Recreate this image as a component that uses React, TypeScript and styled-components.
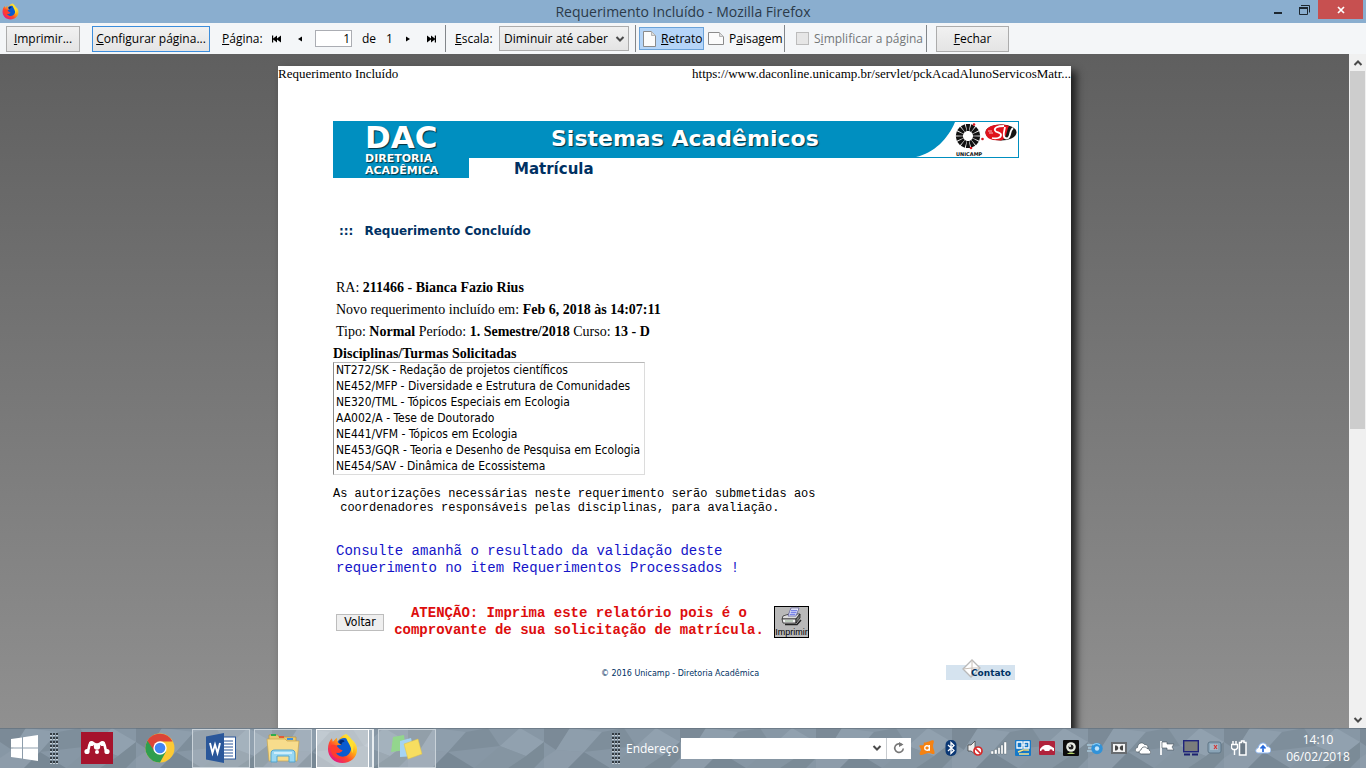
import React from 'react';
import styled, { createGlobalStyle, css } from 'styled-components';

const UI = '"Open Sans", "Noto Sans", sans-serif';
const SERIF = '"Liberation Serif", serif';
const MONO = '"Liberation Mono", monospace';
const VERDANA = '"DejaVu Sans", sans-serif';
const TAHOMA = '"DejaVu Sans Condensed", "DejaVu Sans", sans-serif';
const TEAL = '#008fc0';
const NAVY = '#003163';

const GlobalStyle = createGlobalStyle`
  * { box-sizing: border-box; }
  body { margin: 0; font-family: ${UI}; font-size: 12px; color: #000; overflow: hidden; }
  button, input, select { font: inherit; color: inherit; margin: 0; }
  svg { display: block; flex: none; }
`;

const Window = styled.div`
  display: flex;
  flex-direction: column;
  height: 100vh;
`;

/* ---------- title bar ---------- */

const TitleBar = styled.header`
  display: grid;
  grid-template-columns: 1fr auto 1fr;
  height: 23px;
  background: #8aaecf;
`;
const TitleIcon = styled.div`
  padding: 3px 2px;
`;
const Title = styled.h1`
  margin: 0;
  font-size: 14px;
  font-weight: 400;
  line-height: 23px;
  color: #2b3a49;
`;
const Controls = styled.div`
  display: flex;
  justify-content: flex-end;
  padding-right: 3px;
`;
const ControlButton = styled.button<{ $close?: boolean }>`
  display: flex;
  align-items: center;
  justify-content: center;
  width: ${p => (p.$close ? 45 : 27)}px;
  height: 19px;
  padding: 0;
  border: 0;
  background: ${p => (p.$close ? '#c75050' : 'transparent')};
`;

/* ---------- print toolbar ---------- */

const Toolbar = styled.div`
  display: flex;
  align-items: center;
  height: 31px;
  padding-left: 6px;
  background: #f4f6f8;
  white-space: nowrap;
`;
const ToolButton = styled.button<{ $w: number; $focus?: boolean }>`
  width: ${p => p.$w}px;
  height: 26px;
  padding: 0;
  border: 1px solid ${p => (p.$focus ? '#3c8ddb' : '#acacac')};
  background: linear-gradient(#f1f1f1, #e4e4e4);
`;
const Group = styled.div<{ $start?: number; $w?: number }>`
  display: flex;
  align-items: center;
  padding-left: ${p => p.$start ?? 12}px;
  width: ${p => (p.$w ? p.$w + 'px' : 'auto')};
`;
const FieldLabel = styled.label<{ $w: number }>`
  width: ${p => p.$w}px;
`;
const Nav = styled.button<{ $w: number }>`
  display: flex;
  align-items: center;
  justify-content: center;
  width: ${p => p.$w}px;
  height: 20px;
  padding: 0;
  border: 0;
  background: none;
`;
const PageInput = styled.input`
  width: 37px;
  height: 17px;
  margin-left: 5px;
  padding: 0 1px;
  border: 1px solid #abadb3;
  background: #fff;
  text-align: right;
`;
const Of = styled.span`
  width: 24px;
`;
const Total = styled.span`
  width: 10px;
`;
const Divider = styled.div`
  width: 1px;
  height: 27px;
  background: #82868a;
`;
const SelectWrap = styled.div`
  display: grid;
  align-items: center;
  width: 130px;
  & > * { grid-area: 1 / 1; }
  & > svg { justify-self: end; margin-right: 4px; pointer-events: none; }
`;
const Scale = styled.select`
  appearance: none;
  width: 100%;
  height: 25px;
  padding: 0 18px 0 4px;
  border: 1px solid #acacac;
  border-radius: 0;
  background: linear-gradient(#f1f1f1, #e4e4e4);
`;
const Orientation = styled.button<{ $w: number }>`
  display: flex;
  align-items: center;
  gap: 5px;
  width: ${p => p.$w}px;
  height: 23px;
  padding: 0 3px;
  border: 1px solid transparent;
  background: none;
  &[aria-pressed='true'] {
    border-color: #6ba3d9;
    background: #b5d5f8;
  }
`;
const Simplify = styled.label`
  display: flex;
  align-items: center;
  gap: 5px;
  width: 130px;
  color: #737679;
`;
const Tick = styled.input`
  appearance: none;
  width: 13px;
  height: 13px;
  border: 1px solid #bcbcbc;
  background: #e6e6e6;
`;

/* ---------- preview area ---------- */

const Preview = styled.div`
  display: flex;
  flex: 1;
  min-height: 0;
`;
const Canvas = styled.main`
  flex: 1;
  overflow: hidden;
  padding-top: 12px;
  background: linear-gradient(#5f5f5f, #909090);
`;
const Sheet = styled.article`
  max-width: 793px;
  min-height: 1000px;
  margin: 0 auto;
  background: #fff;
  box-shadow: 5px 5px 8px #1c1c1c;
`;
const RunningHead = styled.div`
  display: flex;
  justify-content: space-between;
  font: 13px/16px ${SERIF};
`;
const SheetBody = styled.div`
  padding: 39px 52px 0 55px;
`;

const Banner = styled.div`
  display: flex;
`;
const Dac = styled.div`
  width: 136px;
  height: 57px;
  padding-left: 32px;
  background: ${TEAL};
  color: #fff;
  font-family: ${VERDANA};
  font-weight: 700;
  text-shadow: 1px 1px 1px #04303f;
`;
const DacName = styled.div`
  font-size: 31px;
  line-height: 32px;
`;
const DacSub = styled.div`
  font-size: 11px;
  line-height: 12px;
`;
const BannerRight = styled.div`
  flex: 1;
`;
const BannerBar = styled.div`
  display: flex;
  justify-content: space-between;
  height: 37px;
  padding-left: 82px;
  border: 1px solid ${TEAL};
  border-left: 0;
  background: ${TEAL};
`;
const SystemName = styled.div`
  color: #fff;
  font: 700 22px/34px ${VERDANA};
  text-shadow: 1px 1px 1px #04303f;
  white-space: nowrap;
`;
const Section = styled.h2`
  margin: 0;
  padding-left: 45px;
  color: ${NAVY};
  font: 700 15px/22px ${VERDANA};
`;
const Heading = styled.h3`
  display: flex;
  gap: 11px;
  margin: 43px 0 38px;
  padding-left: 6px;
  color: ${NAVY};
  font: 700 12px/16px ${VERDANA};
`;
const Fact = styled.p`
  margin: 0;
  padding-left: 3px;
  font: 14px/22px ${SERIF};
`;
const ListLabel = styled.label`
  display: block;
  padding-top: 3px;
  font: 700 14px/16px ${SERIF};
`;
const Courses = styled.select`
  appearance: none;
  display: block;
  width: 312px;
  height: 113px;
  padding: 0;
  overflow: hidden;
  border: 1px solid #dcdcdc;
  border-left-color: #8a8a8a;
  border-top-color: #b8b8b8;
  border-radius: 0;
  background: #fff;
  font: 12px ${TAHOMA};
`;
const Course = styled.option`
  min-height: 0;
  height: 16px;
  padding: 0 2px;
  line-height: 16px;
`;
const Notice = styled.p`
  margin: 12px 0 0;
  font: 12px/14px ${MONO};
  white-space: pre;
`;
const Hint = styled.p`
  margin: 28px 0 0;
  padding-left: 3px;
  color: #1414c8;
  font: 14px/17px ${MONO};
`;
const Actions = styled.div`
  display: flex;
  align-items: center;
  margin: 28px 0 0 3px;
  width: 473px;
`;
const Back = styled.button`
  width: 48px;
  height: 17px;
  padding: 0;
  border: 1px solid #bdbdbd;
  background: #efefef;
  font: 12px/15px ${TAHOMA};
`;
const Warning = styled.p`
  flex: 1;
  margin: 0;
  color: #dd0d0d;
  font: 700 14px/17px ${MONO};
  text-align: center;
`;
const PrintButton = styled.button`
  width: 35px;
  height: 32px;
  padding: 0;
  border: 1px solid #000;
  background: #b9b9b9;
  font: 9px/10px "Liberation Sans", sans-serif;
  display: flex;
  flex-direction: column;
  align-items: center;
`;
const Footer = styled.footer`
  display: grid;
  grid-template-columns: 1fr auto 1fr;
  align-items: end;
  margin-top: 20px;
  padding: 0 4px 0 12px;
  color: ${NAVY};
  font: 8px/12px ${VERDANA};
`;
const Contact = styled.a`
  justify-self: end;
  display: grid;
  width: 69px;
  height: 21px;
  color: ${NAVY};
  font: 700 9px/13px ${VERDANA};
  text-decoration: none;
  background: linear-gradient(transparent 6px, #d5e3ef 6px);
  & > * { grid-area: 1 / 1; }
  & > svg { margin-left: 16px; }
  & > span { justify-self: end; align-self: end; padding-right: 4px; }
`;

const ScrollBar = styled.div`
  display: flex;
  flex-direction: column;
  width: 17px;
  background: #f0f0f0;
`;
const ScrollArrow = styled.button`
  display: grid;
  place-items: center;
  height: 17px;
  padding: 0;
  border: 0;
  background: none;
`;
const ScrollTrack = styled.div`
  flex: 1;
  padding: 0 1px;
`;
const Thumb = styled.div`
  height: 56%;
  background: #cdcdcd;
`;

/* ---------- taskbar ---------- */

const TaskBar = styled.nav`
  display: grid;
  height: 40px;
  overflow: hidden;
  & > * { grid-area: 1 / 1; min-width: 0; }
`;
const TaskRow = styled.div`
  display: flex;
  align-items: center;
  z-index: 1;
  padding-right: 14px;
`;
const TaskButton = styled.button<{ $w: number; $open?: boolean; $active?: boolean }>`
  display: grid;
  place-items: center;
  width: ${p => p.$w}px;
  height: 39px;
  padding: 0;
  border: 1px solid transparent;
  background: none;
  ${p => p.$open && css`
    margin-right: 4px;
    border-color: #c9d2d9;
    background: rgba(255, 255, 255, 0.18);
  `}
  ${p => p.$active && css`
    margin-right: 9px;
    border-color: #fff;
    background: rgba(255, 255, 255, 0.45);
    box-shadow: 4px 0 0 -1px #a3b1bd, 5px 0 0 0 #e8edf0;
  `}
`;
const Spacer = styled.div`
  flex: 1;
`;
const AddressLabel = styled.label`
  width: 61px;
  padding-left: 6px;
  color: #fff;
`;
const AddressBox = styled.div`
  display: flex;
  align-items: center;
  width: 230px;
  height: 21px;
  background: #fff;
`;
const AddressInput = styled.input`
  flex: 1;
  min-width: 0;
  height: 21px;
  border: 0;
  background: transparent;
`;
const AddressButton = styled.button<{ $line?: boolean }>`
  display: grid;
  place-items: center;
  width: ${p => (p.$line ? 25 : 18)}px;
  height: 21px;
  padding: 0;
  border: 0;
  border-left: ${p => (p.$line ? '1px solid #c8ccd0' : '0')};
  background: none;
`;
const Tray = styled.div`
  display: flex;
  margin-left: 4px;
`;
const TrayButton = styled.button`
  display: grid;
  place-items: center;
  width: 24px;
  height: 24px;
  padding: 0;
  border: 0;
  background: none;
`;
const Clock = styled.div`
  width: 77px;
  padding-left: 9px;
  color: #fff;
  line-height: 17px;
  text-align: center;
  white-space: nowrap;
`;

/* ---------- drawings ---------- */

const Firefox = ({ size }: { size: number }) => (
  <svg width={size} height={size} viewBox="0 0 32 32">
    <defs>
      <linearGradient id="fxa" x1="0.85" y1="0.1" x2="0.15" y2="0.9">
        <stop offset="0" stopColor="#fff44f" />
        <stop offset="0.35" stopColor="#ffb014" />
        <stop offset="0.65" stopColor="#ff4a2c" />
        <stop offset="1" stopColor="#e31587" />
      </linearGradient>
    </defs>
    <path d="M16 31C7.500 31 1 24.500 1 16.500C1 12 2.500 8 5 5.500L6 9L10 5L11 9C13 5 16 2 20 1C19.500 3 21 4 23 5.500C28 8 31 12 31 17C31 25 24.500 31 16 31Z" fill="url(#fxa)" />
    <path d="M11 9C14 4 21 4 23 8C26 12 26 20 21 23C17 26 11 24 9 20C12 21 14 20 16 18C13 18 10 16 10 13C11 12 13 12.500 15 12C13 11 11.500 10.500 11 9Z" fill="#0a5bd0" />
    <path d="M13 8C15 6 18 7 18 9C16 9 15 10 15 12C13 11.500 12 10 13 8Z" fill="#002a7a" />
    <path d="M4 13C5 12 7 12 10 13C11 15 13 17 16 18C14 20 12 21 9 20C10 24 15 26 20 24C16 28 9 27 6 23C4 20 3 16 4 13Z" fill="#ff3d2e" />
    <path d="M20 1C27 6 29 13 26 21C25 14 22 10 20.500 7C19.500 5 19.500 3 20 1Z" fill="#ffe02e" />
  </svg>
);

const Sheetlet = ({ wide }: { wide?: boolean }) => (
  <svg width={wide ? 16 : 13} height={wide ? 13 : 16} viewBox={wide ? '0 0 16 13' : '0 0 13 16'}>
    <path d={wide ? 'M.5 .5H11.500L15.500 4.500V12.500H.5Z' : 'M.5 .5H8.500L12.500 4.500V15.500H.5Z'} fill="#fbfbfb" stroke="#8b8b8b" />
    <path d={wide ? 'M11.500 .5V4.500H15.500' : 'M8.500 .5V4.500H12.500'} fill="#ddd" stroke="#b5b5b5" />
  </svg>
);

const Chevron = ({ up, size = 10 }: { up?: boolean; size?: number }) => (
  <svg width={size} height={size} viewBox="0 0 10 10">
    <path d={up ? 'M1.500 7L5 3.500L8.500 7' : 'M1.500 3L5 6.500L8.500 3'} fill="none" stroke="#4a4a4a" strokeWidth="2" />
  </svg>
);

const NavGlyph = ({ kind }: { kind: 'first' | 'prev' | 'next' | 'last' }) => {
  const flip = kind === 'next' || kind === 'last';
  const end = kind === 'first' || kind === 'last';
  return (
    <svg width="12" height="8" viewBox="0 0 12 8">
      <g transform={flip ? 'translate(12 0) scale(-1 1)' : undefined}>
        {end ? <path d="M1 0.500H2.200V3.500L6 0.500V3.500L10 0.500V7.500L6 4.500V7.500L2.200 4.500V7.500H1Z" /> : <path d="M8 1.500V6.500L4 4Z" />}
      </g>
    </svg>
  );
};

const spokes = Array.from({ length: 14 }, (_, i) => (i * 360) / 14);
const Logos = () => (
  <svg width="102" height="35" viewBox="0 0 102 35">
    <path d="M0 35C18 31 32 17 39 0H102V35Z" fill="#fff" />
    {spokes.map(a => (
      <path key={a} d="M-1 -5L-2.200 -12H2.200L1 -5Z" transform={`translate(52 14) rotate(${a})`} fill="#111" />
    ))}
    <circle cx="58" cy="2.500" r="1.300" fill="#d8141c" />
    <circle cx="66.500" cy="17" r="1.300" fill="#d8141c" />
    <circle cx="55" cy="26" r="1.300" fill="#d8141c" />
    <text x="40" y="34" fontFamily="DejaVu Sans" fontWeight="700" fontSize="5" fill="#111">UNICAMP</text>
    <ellipse cx="85" cy="10.500" rx="15.500" ry="8" fill="#151515" />
    <path d="M85 2.500C74 2.500 69 6.500 69.500 11.500C70 15 73 17 77 18L85 18.500C91 17 90 9 93 4C90 3 88 2.500 85 2.500Z" fill="#e0121c" />
    <path d="M88 4C81 4 78 6 79 8.500C80 11 85 10 85 13C85 16 80 17 76 16" fill="none" stroke="#fff" strokeWidth="1.800" />
    <path d="M89 5C88 10 86 16.500 91 16.500C95 16.500 93 9 97 6" fill="none" stroke="#fff" strokeWidth="1.800" />
    <path d="M72 9H76M73 11H77" stroke="#fff" strokeWidth="0.700" />
  </svg>
);

const Printer = () => (
  <svg width="24" height="20" viewBox="0 0 24 20">
    <path d="M3 9L9 7H20L16 12H2Z" fill="#ddd" stroke="#333" strokeWidth="0.800" />
    <path d="M8 9L11 1H19L16 9Z" fill="#fff" stroke="#5a5a9a" strokeWidth="0.800" />
    <path d="M11 3.500H17M10.500 5.500H16.500M9.500 7.500H15.500" stroke="#7a84e8" strokeWidth="1.400" />
    <path d="M2 12H16V16H3Z" fill="#f4f4f4" stroke="#222" strokeWidth="0.800" />
    <path d="M16 12L20 7V11L16 16Z" fill="#777" stroke="#222" strokeWidth="0.800" />
    <path d="M5 17.500H17L21 13" stroke="#222" strokeWidth="1.500" fill="none" />
    <path d="M5 14H13" stroke="#8aa88a" />
  </svg>
);

const Envelope = () => (
  <svg width="20" height="19" viewBox="0 0 20 19">
    <path d="M1 10L10 1L18 9L9 18Z" fill="#fff" stroke="#b9b9b9" strokeWidth="1.300" />
    <path d="M10 1V9L18 9M10 9L1 10M10 9L9 18" stroke="#c9c0b8" fill="none" />
  </svg>
);

const Grip = () => (
  <svg width="8" height="32" viewBox="0 0 8 32">
    {Array.from({ length: 8 }, (_, r) =>
      [0, 3, 6].map(x => (
        <g key={`${r}-${x}`}>
          <rect x={x} y={r * 4 + 1} width="2" height="2" fill="#343c43" />
          <rect x={x} y={r * 4 + 3} width="2" height="1" fill="#c6d0d8" />
        </g>
      ))
    )}
  </svg>
);

const Wallpaper = () => (
  <svg width="100%" height="40">
    <defs>
      <pattern id="facets" width="136" height="40" patternUnits="userSpaceOnUse">
        <rect width="136" height="40" fill="#8797a5" />
        <path d="M0 0L26 0L12 22L0 14Z" fill="#7b8a97" />
        <path d="M26 0L58 4L40 24L12 22Z" fill="#8e9eac" />
        <path d="M58 4L80 0L92 18L40 24Z" fill="#7e8e9b" />
        <path d="M12 22L40 24L24 40H0V30Z" fill="#8d9caa" />
        <path d="M40 24L66 40H24Z" fill="#788895" />
        <path d="M92 18L112 0L136 14L118 28Z" fill="#91a1af" />
        <path d="M92 18L118 28L100 40H66Z" fill="#8595a2" />
        <path d="M118 28L136 14V30L126 40H100Z" fill="#7b8b97" />
      </pattern>
    </defs>
    <rect width="100%" height="40" fill="url(#facets)" />
    <rect width="100%" height="1" fill="#5f6d78" opacity="0.600" />
  </svg>
);

const WindowsLogo = () => (
  <svg width="28" height="26" viewBox="0 0 28 26">
    <path d="M0 4L11 2.500V12.500H0ZM12 2.300L27 0V12.500H12ZM0 13.500H11V23.500L0 22ZM12 13.500H27V26L12 23.700Z" fill="#fff" />
  </svg>
);
const Mendeley = () => (
  <svg width="32" height="32" viewBox="0 0 32 32">
    <rect width="32" height="32" fill="#a6132c" />
    <path d="M6 19C9 18 7 12 10 11C12 10 14 13 16 13C18 13 20 10 22 11C25 12 23 18 26 19" fill="none" stroke="#fff" strokeWidth="2.600" />
    <circle cx="10.500" cy="11.500" r="2.600" fill="#fff" /><circle cx="21.500" cy="11.500" r="2.600" fill="#fff" />
    <circle cx="6" cy="19.500" r="2.600" fill="#fff" /><circle cx="26" cy="19.500" r="2.600" fill="#fff" />
    <circle cx="16" cy="14.500" r="3.200" fill="#fff" />
    <circle cx="16" cy="20" r="2" fill="#fff" />
  </svg>
);
const Chrome = () => (
  <svg width="30" height="30" viewBox="0 0 30 30">
    <circle cx="15" cy="15" r="14.500" fill="#fcc934" />
    <path d="M15 15L2.440 7.750A14.500 14.500 0 0 0 15 29.500L21 18.500Z" fill="#2f9e4f" />
    <path d="M15 8.500H27.560A14.500 14.500 0 0 0 2.440 7.750L9.400 18.200Z" fill="#dc4437" />
    <circle cx="15" cy="15" r="6.700" fill="#fff" />
    <circle cx="15" cy="15" r="5.300" fill="#4285f4" />
  </svg>
);
const Word = () => (
  <svg width="30" height="30" viewBox="0 0 30 30">
    <rect x="15" y="4" width="14.500" height="22" fill="#fff" stroke="#2a579a" />
    <path d="M18 8H27M18 11H27M18 14H27M18 17H27M18 20H27M18 23H27" stroke="#2a579a" strokeWidth="1.200" />
    <path d="M0 3.500L18 0V30L0 26.500Z" fill="#2a579a" />
    <path d="M4 10L6.500 20L9 11.500L11.500 20L14 10" fill="none" stroke="#fff" strokeWidth="1.900" />
  </svg>
);
const Explorer = () => (
  <svg width="34" height="30" viewBox="0 0 34 30">
    <path d="M3 2H12L13 4H30V12H3Z" fill="#e9c870" stroke="#bb9740" strokeWidth="0.700" />
    <path d="M5 1H10V3H5Z" fill="#2fae4b" /><path d="M13 3H18V5H13Z" fill="#e25b38" /><path d="M21 5H27V7H21Z" fill="#3d8fdc" />
    <path d="M1 6H19L21 8H33L31 28H3Z" fill="#f7dc8c" stroke="#c9a54e" strokeWidth="0.700" />
    <path d="M5 29V21C5 18 6 17 9 17H25C28 17 29 18 29 21V29H23V23H11V29Z" fill="#98d7f3" stroke="#55a5cd" />
    <path d="M8 20H26" stroke="#e2f6fe" strokeWidth="1.500" />
  </svg>
);
const Sticky = () => (
  <svg width="32" height="26" viewBox="0 0 32 26">
    <path d="M2 2L13 0L15 15L0 17Z" fill="#93d68d" />
    <path d="M9 6L20 3L24 21L9 22Z" fill="#a5d3f3" />
    <path d="M13 9L27 4L31 19L17 24Z" fill="#f7de60" stroke="#e0c246" strokeWidth="0.500" />
  </svg>
);

const trayIcons: [string, React.ReactNode][] = [
  ['Avast', <>
    <path d="M5 2.500C7 3 8 1.500 10 1.500C12 1 13 0 14.500 0.500C15.500 1.500 14 4 14 6C14 9 16 11 15.500 13.500C14 15 12 13 10 13C7 13 4 15.500 1.500 15C-0.500 14 1.500 11.500 2 10C2 8 0 7 0.500 5.500C1.500 4.500 3.500 6 4.500 5Z" fill="#f58212" />
    <path d="M10.300 5V10.800M10.300 7C9 4.800 5.700 5.600 5.700 8S9 11 10.300 9" fill="none" stroke="#fff" strokeWidth="1.400" /></>],
  ['Bluetooth', <>
    <rect x="2.500" width="11" height="16" rx="5" fill="#0b3875" />
    <path d="M5 5L11 10.500L8 13.500V2.500L11 5.500L5 11" fill="none" stroke="#fff" strokeWidth="1.300" /></>],
  ['Volume', <>
    <path d="M1 5H4L8 1V14L4 11H1Z" fill="#eee" stroke="#333" strokeWidth="0.700" />
    <circle cx="11" cy="11" r="4" fill="#fff" stroke="#d62828" strokeWidth="1.700" /><path d="M8.500 8.500L13.500 13.500" stroke="#d62828" strokeWidth="1.700" /></>],
  ['Rede', <path d="M0 11H2.500V14H0ZM3.500 9.500H6V14H3.500ZM7 7.500H9V14H7ZM10 5H12V14H10ZM13 2H15.500V14H13Z" fill="#fff" stroke="#44505a" strokeWidth="0.300" />],
  ['Monitor', <>
    <rect width="16" height="16" rx="1" fill="#1679c8" />
    <path d="M2 2H7V8H2ZM9 2H14V8H9Z" fill="none" stroke="#fff" strokeWidth="1.300" /><path d="M3 12L8 10L14 10M4 14H14" stroke="#f2e28e" strokeWidth="1.500" /><path d="M7 5H12" stroke="#fff" /></>],
  ['Veículo', <>
    <rect y="1" width="16" height="14" rx="1" fill="#b0233b" />
    <path d="M1 9C3 7 4 5 8 5S12 7 15 8V11H1Z" fill="#fff" /><circle cx="4" cy="11" r="1.700" fill="#b0233b" /><circle cx="12" cy="11" r="1.700" fill="#b0233b" /></>],
  ['Câmera', <>
    <rect width="16" height="16" rx="1" fill="#0c0c0c" />
    <circle cx="8" cy="7" r="4.800" fill="#e8ece4" /><circle cx="8" cy="7" r="2.500" fill="#222" /><circle cx="7" cy="6" r="1" fill="#fff" /><path d="M4 14C6 12 10 12 12 14Z" fill="#b6d56a" /></>],
  ['Sincronização', <>
    <path d="M0 5H7M1 8H6M0 11H7" stroke="#a9c9da" strokeWidth="1.500" />
    <circle cx="10" cy="8.500" r="5.700" fill="#3192d8" /><circle cx="10" cy="8.500" r="2.200" fill="#bfe3fa" /><path d="M6 5C8 3 11 3 13 5" fill="none" stroke="#8fcdf2" strokeWidth="1.200" /></>],
  ['Dolby', <>
    <rect y="2" width="16" height="12" fill="#686c70" /><rect x="2" y="4" width="12" height="8" fill="#f4f4f4" />
    <path d="M4 5.500H5C8 6 8 10 5 10.500H4ZM12 5.500H11C8 6 8 10 11 10.500H12Z" fill="#444" /></>],
  ['OneDrive', <>
    <path d="M2.500 12C-0.500 12 -0.500 8 2.500 7.500C2.500 3 7.500 1.500 9.500 4.500C12 4 13 6 13 8L7 12Z" fill="#fff" stroke="#4c5962" strokeWidth="0.700" />
    <path d="M6.500 14C3.500 14 3.500 10.500 6 10C6.500 6.500 11 6 12 8.500C14 8.500 14.500 9.500 14.500 10.500C16.500 11 16 14 14 14Z" fill="#fff" stroke="#4c5962" strokeWidth="0.800" /></>],
  ['Central de Ações', <>
    <path d="M2 1V15" stroke="#fff" strokeWidth="1.700" /><path d="M3 2H8V4H15L13 7L15 10H8V8H3Z" fill="#fff" stroke="#46525c" strokeWidth="0.600" /></>],
  ['Vídeo', <>
    <rect x="0.700" y="0.700" width="14.600" height="11" fill="#7b7d7b" stroke="#20247c" strokeWidth="1.400" /><path d="M1 14.500H7M9 14.500H15" stroke="#1b206e" strokeWidth="2" /></>],
  ['Memória', <>
    <rect x="1" y="2" width="13" height="11" rx="2" fill="#8aa4b7" stroke="#5e7585" /><rect x="3" y="4" width="8" height="6" fill="#a5b8c6" /><path d="M7 5L10 9M10 5L7 9" stroke="#d43434" strokeWidth="1.200" /></>],
  ['Bateria', <>
    <path d="M0.500 4.500H6.500V8L5 9.500H2L0.500 8ZM2 1V4M5 1V4M3.500 9V15" fill="none" stroke="#fff" strokeWidth="1.400" />
    <path d="M8.500 2.500H10.500V1H13V2.500H15V15H8.500Z" fill="#6c7a86" stroke="#fff" strokeWidth="1.500" /></>],
  ['Nuvem', <>
    <path d="M3 13C0 13 0 8.500 3 8C4 2 11 1 12 6.500C17 6.500 17 13 13 13Z" fill="#fff" stroke="#8bb4ee" />
    <path d="M8 12V6.500M5.500 8.500L8 6L10.500 8.500" fill="none" stroke="#2468dc" strokeWidth="1.700" /></>],
];

const courses = [
  'NT272/SK - Redação de projetos científicos',
  'NE452/MFP - Diversidade e Estrutura de Comunidades',
  'NE320/TML - Tópicos Especiais em Ecologia',
  'AA002/A - Tese de Doutorado',
  'NE441/VFM - Tópicos em Ecologia',
  'NE453/GQR - Teoria e Desenho de Pesquisa em Ecologia',
  'NE454/SAV - Dinâmica de Ecossistema',
];

export default function App() {
  return (
    <Window>
      <GlobalStyle />
      <TitleBar>
        <TitleIcon><Firefox size={17} /></TitleIcon>
        <Title>Requerimento Incluído - Mozilla Firefox</Title>
        <Controls>
          <ControlButton aria-label="Minimizar">
            <svg width="8" height="10"><rect y="7" width="8" height="2" fill="#1d2730" /></svg>
          </ControlButton>
          <ControlButton aria-label="Restaurar">
            <svg width="11" height="10" viewBox="0 0 11 10">
              <path d="M2 .5H10.500V7.500" fill="none" stroke="#1d2730" />
              <path d="M.5 2.500H8.500V9.500H.5Z" fill="none" stroke="#1d2730" /><path d="M0 3H9" stroke="#1d2730" strokeWidth="2" />
            </svg>
          </ControlButton>
          <ControlButton $close aria-label="Fechar janela">
            <svg width="8" height="8"><path d="M1 1L7 7M7 1L1 7" stroke="#fff" strokeWidth="1.700" /></svg>
          </ControlButton>
        </Controls>
      </TitleBar>

      <Toolbar>
        <ToolButton $w={74}><u>I</u>mprimir...</ToolButton>
        <Group><ToolButton $w={118} $focus><u>C</u>onfigurar página...</ToolButton></Group>
        <Group $w={235}>
          <FieldLabel htmlFor="page" $w={43}><u>P</u>ágina:</FieldLabel>
          <Nav $w={24} aria-label="Primeira página"><NavGlyph kind="first" /></Nav>
          <Nav $w={21} aria-label="Página anterior"><NavGlyph kind="prev" /></Nav>
          <PageInput id="page" defaultValue="1" />
          <Group $start={10}><Of>de</Of><Total>1</Total></Group>
          <Nav $w={24} aria-label="Próxima página"><NavGlyph kind="next" /></Nav>
          <Nav $w={22} aria-label="Última página"><NavGlyph kind="last" /></Nav>
        </Group>
        <Divider />
        <Group $start={9} $w={189}>
          <FieldLabel htmlFor="scale" $w={44}><u>E</u>scala:</FieldLabel>
          <SelectWrap>
            <Scale id="scale"><option>Diminuir até caber</option></Scale>
            <Chevron />
          </SelectWrap>
        </Group>
        <Divider />
        <Group $start={3} $w={148}>
          <Orientation $w={65} aria-pressed="true"><Sheetlet /><span><u>R</u>etrato</span></Orientation>
          <Orientation $w={80} aria-pressed="false"><Sheetlet wide /><span>P<u>a</u>isagem</span></Orientation>
        </Group>
        <Divider />
        <Group $start={11}>
          <Simplify><Tick type="checkbox" disabled /><span>S<u>i</u>mplificar a página</span></Simplify>
        </Group>
        <Divider />
        <Group $start={9}><ToolButton $w={73}><u>F</u>echar</ToolButton></Group>
      </Toolbar>

      <Preview>
        <Canvas>
          <Sheet>
            <RunningHead>
              <span>Requerimento Incluído</span>
              <span>https://www.daconline.unicamp.br/servlet/pckAcadAlunoServicosMatr...</span>
            </RunningHead>
            <SheetBody>
              <Banner>
                <Dac>
                  <DacName>DAC</DacName>
                  <DacSub>DIRETORIA</DacSub>
                  <DacSub>ACADÊMICA</DacSub>
                </Dac>
                <BannerRight>
                  <BannerBar>
                    <SystemName>Sistemas Acadêmicos</SystemName>
                    <Logos />
                  </BannerBar>
                  <Section>Matrícula</Section>
                </BannerRight>
              </Banner>

              <Heading><span>:::</span><span>Requerimento Concluído</span></Heading>

              <Fact>RA: <b>211466 - Bianca Fazio Rius</b></Fact>
              <Fact>Novo requerimento incluído em: <b>Feb 6, 2018 às 14:07:11</b></Fact>
              <Fact>Tipo: <b>Normal</b> Período: <b>1. Semestre/2018</b> Curso: <b>13 - D</b></Fact>
              <ListLabel htmlFor="courses">Disciplinas/Turmas Solicitadas</ListLabel>
              <Courses id="courses" multiple size={7}>
                {courses.map(c => <Course key={c}>{c}</Course>)}
              </Courses>

              <Notice>{'As autorizações necessárias neste requerimento serão submetidas aos\n coordenadores responsáveis pelas disciplinas, para avaliação.'}</Notice>
              <Hint>Consulte amanhã o resultado da validação deste<br />requerimento no item Requerimentos Processados !</Hint>

              <Actions>
                <Back>Voltar</Back>
                <Warning>ATENÇÃO: Imprima este relatório pois é o<br />comprovante de sua solicitação de matrícula.</Warning>
                <PrintButton><Printer />Imprimir</PrintButton>
              </Actions>

              <Footer>
                <span />
                <span>© 2016 Unicamp - Diretoria Acadêmica</span>
                <Contact href="#contato"><Envelope /><span>Contato</span></Contact>
              </Footer>
            </SheetBody>
          </Sheet>
        </Canvas>
        <ScrollBar>
          <ScrollArrow aria-label="Rolar para cima"><Chevron up /></ScrollArrow>
          <ScrollTrack><Thumb /></ScrollTrack>
          <ScrollArrow aria-label="Rolar para baixo"><Chevron /></ScrollArrow>
        </ScrollBar>
      </Preview>

      <TaskBar>
        <Wallpaper />
        <TaskRow>
          <TaskButton $w={50} aria-label="Iniciar"><WindowsLogo /></TaskButton>
          <Grip />
          <Group $start={8}>
            <TaskButton $w={62} aria-label="Mendeley"><Mendeley /></TaskButton>
            <TaskButton $w={64} aria-label="Chrome"><Chrome /></TaskButton>
            <TaskButton $w={58} $open aria-label="Word"><Word /></TaskButton>
            <TaskButton $w={58} $open aria-label="Explorador de Arquivos"><Explorer /></TaskButton>
            <TaskButton $w={53} $open $active aria-label="Firefox"><Firefox size={31} /></TaskButton>
            <TaskButton $w={58} $open aria-label="Notas Autoadesivas"><Sticky /></TaskButton>
          </Group>
          <Spacer />
          <Grip />
          <AddressLabel htmlFor="address">Endereço</AddressLabel>
          <AddressBox>
            <AddressInput id="address" />
            <AddressButton aria-label="Endereços anteriores"><Chevron /></AddressButton>
            <AddressButton $line aria-label="Atualizar">
              <svg width="12" height="12" viewBox="0 0 12 12">
                <path d="M9 3A4.300 4.300 0 1 0 10.300 6.500" fill="none" stroke="#777" strokeWidth="1.600" />
                <path d="M6 0L10.500 2.500L6 5Z" fill="#777" />
              </svg>
            </AddressButton>
          </AddressBox>
          <Tray>
            {trayIcons.map(([name, art]) => (
              <TrayButton key={name} aria-label={name}>
                <svg width="16" height="16" viewBox="0 0 16 16">{art}</svg>
              </TrayButton>
            ))}
          </Tray>
          <Clock>14:10<br />06/02/2018</Clock>
        </TaskRow>
      </TaskBar>
    </Window>
  );
}
